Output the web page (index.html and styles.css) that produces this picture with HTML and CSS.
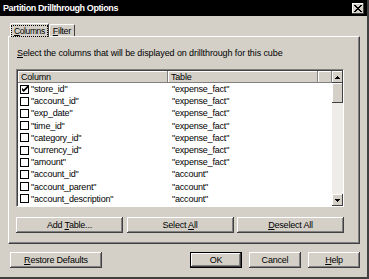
FILE: index.html
```html
<!DOCTYPE html>
<html lang="en">
<head>
    <meta charset="UTF-8">
    <title>Partition Drillthrough Options</title>
    <link rel="stylesheet" href="styles.css">
</head>
<body>
    <div class="window">
        <div class="titlebar">
            <span class="title">Partition Drillthrough Options</span>
            <span class="close">
                <svg width="8" height="7" viewBox="0 0 8 7"><path d="M0 0h2v1h1v1h2V1h1V0h2v1H7v1H6v1H5v1h1v1h1v1h1v1H6V6H5V5H3v1H2v1H0V6h1V5h1V4h1V3H2V2H1V1H0z" fill="#000"/></svg>
            </span>
        </div>

        <div class="content">
            <div class="tabs">
                <div class="tab active"><span class="focus"><u>C</u>olumns</span></div>
                <div class="tab"><u>F</u>ilter</div>
            </div>

            <div class="panel">
                <p class="hint"><u>S</u>elect the columns that will be displayed on drillthrough for this cube</p>

                <div class="list">
                    <div class="list-main">
                        <div class="header">
                            <div class="hcell col1">Column</div>
                            <div class="hcell col2">Table</div>
                            <div class="hcell col3"></div>
                        </div>
                        <div class="rows">
                            <div class="row"><span class="check"><svg width="7" height="7" viewBox="0 0 7 7"><path d="M0 2v3l2 2l5-5V-1L2 4z" fill="#000"/></svg></span><span class="c1">"store_id"</span><span class="c2">"expense_fact"</span></div>
                            <div class="row"><span class="check"></span><span class="c1">"account_id"</span><span class="c2">"expense_fact"</span></div>
                            <div class="row"><span class="check"></span><span class="c1">"exp_date"</span><span class="c2">"expense_fact"</span></div>
                            <div class="row"><span class="check"></span><span class="c1">"time_id"</span><span class="c2">"expense_fact"</span></div>
                            <div class="row"><span class="check"></span><span class="c1">"category_id"</span><span class="c2">"expense_fact"</span></div>
                            <div class="row"><span class="check"></span><span class="c1">"currency_id"</span><span class="c2">"expense_fact"</span></div>
                            <div class="row"><span class="check"></span><span class="c1">"amount"</span><span class="c2">"expense_fact"</span></div>
                            <div class="row"><span class="check"></span><span class="c1">"account_id"</span><span class="c2">"account"</span></div>
                            <div class="row"><span class="check"></span><span class="c1">"account_parent"</span><span class="c2">"account"</span></div>
                            <div class="row"><span class="check"></span><span class="c1">"account_description"</span><span class="c2">"account"</span></div>
                            <div class="row"><span class="check"></span><span class="c1">"account_type"</span><span class="c2">"account"</span></div>
                        </div>
                    </div>
                    <div class="scrollbar">
                        <div class="sbtn"><svg width="5" height="3" viewBox="0 0 5 3"><path d="M2 0h1v1h1v1h1v1H0V2h1V1h1z" fill="#000"/></svg></div>
                        <div class="thumb"></div>
                        <div class="track"></div>
                        <div class="sbtn"><svg width="5" height="3" viewBox="0 0 5 3"><path d="M0 0h5v1H4v1H3v1H2V2H1V1H0z" fill="#000"/></svg></div>
                    </div>
                </div>

                <div class="btnrow">
                    <button class="btn">Add <u>T</u>able...</button>
                    <button class="btn">Select <u>A</u>ll</button>
                    <button class="btn"><u>D</u>eselect All</button>
                </div>
            </div>

            <div class="footer">
                <button class="btn wide"><u>R</u>estore Defaults</button>
                <div class="right">
                    <button class="btn small default">OK</button>
                    <button class="btn small">Cancel</button>
                    <button class="btn small"><u>H</u>elp</button>
                </div>
            </div>
        </div>
    </div>
</body>
</html>
```

FILE: styles.css
```css
body {
    margin: 0;
    background: #d4d0c8;
    font-family: "Liberation Sans", Arial, sans-serif;
    font-size: 9px;
    letter-spacing: -0.2px;
    color: #000;
}
.window {
    width: 369px;
    height: 279px;
    box-sizing: border-box;
    background: #d4d0c8;
    border-right: 2px solid #404040;
    border-bottom: 2px solid #404040;
    overflow: hidden;
}
.titlebar {
    height: 16px;
    background: #000;
    display: flex;
    align-items: center;
    justify-content: space-between;
    padding: 0 3px 0 3px;
}
.title {
    color: #fff;
    font-weight: bold;
    font-size: 9px;
    letter-spacing: -0.4px;
}
.close {
    width: 12px;
    height: 11px;
    background: #d4d0c8;
    box-shadow: inset -1px -1px #404040, inset 1px 1px #fff;
    display: flex;
    align-items: center;
    justify-content: center;
}
.content {
    padding: 6px 7px 0 8px;
}
.tabs {
    display: flex;
    padding-left: 2px;
    height: 14px;
    align-items: flex-end;
}
.tab {
    height: 12px;
    padding: 0 3px;
    border-top: 1px solid #fff;
    border-left: 1px solid #fff;
    border-right: 1px solid #404040;
    border-radius: 2px 2px 0 0;
    box-sizing: border-box;
    display: flex;
    align-items: center;
    font-size: 9px;
    letter-spacing: -0.3px;
}
.tab.active {
    height: 14px;
    margin-bottom: -1px;
    padding: 0 1px;
    background: #d4d0c8;
    position: relative;
    z-index: 1;
    font-size: 8.5px;
    letter-spacing: -0.4px;
}
.focus {
    outline: 1px dotted #000;
    padding: 0 2px;
    line-height: 10px;
}
.panel {
    height: 208px;
    box-sizing: border-box;
    border-top: 1px solid #fff;
    border-left: 1px solid #fff;
    border-right: 1px solid #404040;
    border-bottom: 1px solid #404040;
    box-shadow: inset -1px -1px #808080;
    padding: 10px 15px 0 7px;
}
.hint {
    margin: 0 0 10px 1px;
    line-height: 12px;
    letter-spacing: -0.1px;
}
.list {
    height: 138px;
    display: flex;
    box-sizing: border-box;
    border-top: 1px solid #808080;
    border-left: 1px solid #808080;
    border-right: 1px solid #fff;
    border-bottom: 1px solid #fff;
    box-shadow: inset 1px 1px #404040;
    background: #fff;
    padding: 1px 0 0 1px;
}
.list-main {
    flex: 1;
    overflow: hidden;
}
.header {
    display: flex;
    height: 12px;
    background: #d4d0c8;
}
.hcell {
    box-sizing: border-box;
    padding-left: 3px;
    line-height: 12px;
    box-shadow: inset -1px -1px #808080, inset 1px 1px #fff;
}
.col1 { width: 150px; }
.col2 { width: 150px; }
.col3 { flex: 1; }
.row {
    height: 12.2px;
    display: flex;
    align-items: center;
}
.check {
    width: 7px;
    height: 7px;
    border: 1px solid #000;
    margin: 0 2px 0 2px;
    display: flex;
    align-items: center;
    justify-content: center;
    flex-shrink: 0;
}
.check svg {
    width: 6px;
    height: 6px;
}
.c1 { width: 141px; }
.scrollbar {
    width: 11px;
    display: flex;
    flex-direction: column;
    background: #eeede9;
}
.sbtn, .thumb {
    background: #d4d0c8;
    box-shadow: inset -1px -1px #404040, inset 1px 1px #fff;
}
.sbtn {
    height: 12px;
    display: flex;
    align-items: center;
    justify-content: center;
}
.thumb { height: 20px; }
.track { flex: 1; }
.btnrow {
    display: flex;
    justify-content: space-between;
    margin-top: 10px;
}
.btn {
    font-family: "Liberation Sans", Arial, sans-serif;
    font-size: 9px;
    letter-spacing: -0.2px;
    width: 107px;
    height: 16px;
    padding: 0;
    border: none;
    background: #d4d0c8;
    box-shadow: inset -1px -1px #404040, inset 1px 1px #fff, inset -2px -2px #808080;
    color: #000;
    line-height: 16px;
}
.footer {
    display: flex;
    justify-content: space-between;
    margin-top: 8px;
    padding-left: 2px;
}
.right {
    display: flex;
    gap: 7px;
}
.btn.small {
    width: 52px;
}
.btn.wide {
    width: 92px;
}
.btn.default {
    box-shadow: inset 0 0 0 1px #000, inset -2px -2px #404040, inset 2px 2px #fff, inset -3px -3px #808080;
}
```
